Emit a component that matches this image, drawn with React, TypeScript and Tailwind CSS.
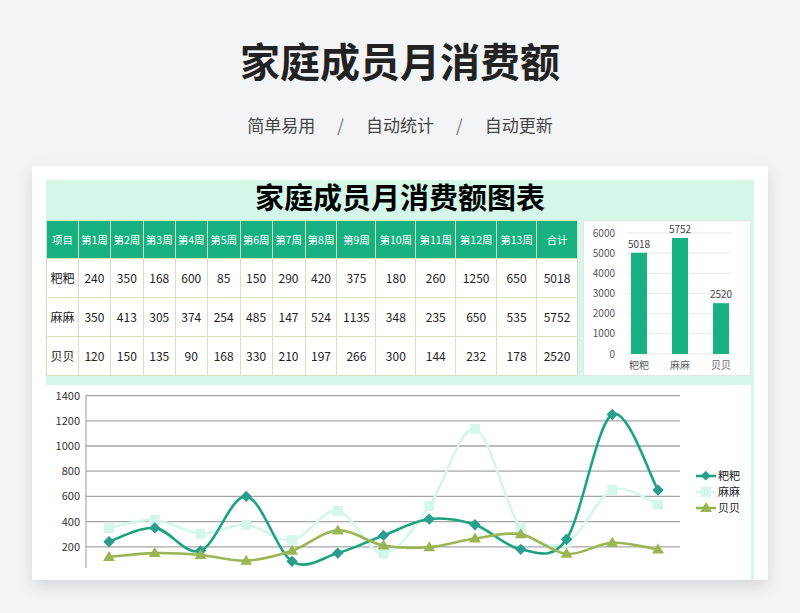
import React from "react";

const weeks = ["第1周","第2周","第3周","第4周","第5周","第6周","第7周","第8周","第9周","第10周","第11周","第12周","第13周"];
const rows = [
  { name: "粑粑", vals: [240,350,168,600,85,150,290,420,375,180,260,1250,650], total: 5018 },
  { name: "麻麻", vals: [350,413,305,374,254,485,147,524,1135,348,235,650,535], total: 5752 },
  { name: "贝贝", vals: [120,150,135,90,168,330,210,197,266,300,144,232,178], total: 2520 },
];
const colW = [32,32,33,32,32,33,32,33,32,39,40,40,41,40,41];
const font = { fontFamily: '"Noto Sans CJK SC", "Noto Sans", sans-serif' };

function smooth(pts: [number, number][]) {
  let d = `M${pts[0][0]},${pts[0][1]}`;
  for (let i = 0; i < pts.length - 1; i++) {
    const p0 = pts[i - 1] || pts[i], p1 = pts[i], p2 = pts[i + 1], p3 = pts[i + 2] || p2;
    const c1 = [p1[0] + (p2[0] - p0[0]) / 6, p1[1] + (p2[1] - p0[1]) / 6];
    const c2 = [p2[0] - (p3[0] - p1[0]) / 6, p2[1] - (p3[1] - p1[1]) / 6];
    d += ` C${c1[0]},${c1[1]} ${c2[0]},${c2[1]} ${p2[0]},${p2[1]}`;
  }
  return d;
}

function BarChart() {
  const y0 = 132, k = 121 / 6000;
  const bars = [{ n: "粑粑", v: 5018, x: 55 }, { n: "麻麻", v: 5752, x: 96 }, { n: "贝贝", v: 2520, x: 137 }];
  return (
    <svg width="166" height="154" className="block">
      {[0,1000,2000,3000,4000,5000,6000].map((t) => (
        <g key={t}>
          <line x1="43" x2="146" y1={y0 - t * k} y2={y0 - t * k} stroke="#e5e5e5" />
          <text x="31" y={y0 - t * k + 3.5} fontSize="10" textAnchor="end" fill="#555">{t}</text>
        </g>
      ))}
      {bars.map((b) => (
        <g key={b.n}>
          <rect x={b.x - 8} y={y0 - b.v * k} width="16" height={b.v * k} fill="#17b181" />
          <text x={b.x} y={y0 - b.v * k - 5} fontSize="10" textAnchor="middle" fill="#444">{b.v}</text>
          <text x={b.x} y={y0 + 15} fontSize="10" textAnchor="middle" fill="#666">{b.n}</text>
        </g>
      ))}
    </svg>
  );
}

function LineChart() {
  const x = (i: number) => 63 + i * 45.75;
  const y = (v: number) => 187 - v * 0.126;
  const colors = ["#1aa37f", "#d3f7ea", "#9bb554"];
  return (
    <svg width="706" height="183" className="block">
      {[0,200,400,600,800,1000,1200,1400].map((t) => (
        <g key={t}>
          <line x1="40" x2="634" y1={y(t)} y2={y(t)} stroke="#a6a6a6" strokeWidth="1.3" />
          {t > 0 && <text x="34" y={y(t) + 4} fontSize="11" textAnchor="end" fill="#333">{t}</text>}
        </g>
      ))}
      <line x1="40" x2="40" y1={y(1400)} y2="183" stroke="#999" />
      {[1, 0, 2].map((ri) => {
        const pts = rows[ri].vals.map((v, i) => [x(i), y(v)] as [number, number]);
        return (
          <g key={ri}>
            <path d={smooth(pts)} fill="none" stroke={colors[ri]} strokeWidth="2.6" />
            {pts.map(([px, py], i) =>
              ri === 0 ? <rect key={i} x={px - 4} y={py - 4} width="8" height="8" transform={`rotate(45 ${px} ${py})`} fill="#2a9d8f" />
              : ri === 1 ? <rect key={i} x={px - 5} y={py - 5} width="10" height="10" fill="#d3f7ea" />
              : <polygon key={i} points={`${px},${py - 6} ${px + 6},${py + 4} ${px - 6},${py + 4}`} fill="#9bb554" />
            )}
          </g>
        );
      })}
      {rows.map((r, i) => {
        const ly = 91 + i * 16;
        return (
          <g key={r.name}>
            <line x1="650" x2="670" y1={ly} y2={ly} stroke={colors[i]} strokeWidth="2.6" />
            {i === 0 ? <rect x="656" y={ly - 3.5} width="7" height="7" transform={`rotate(45 660 ${ly})`} fill="#2a9d8f" />
              : i === 1 ? <rect x="655" y={ly - 5} width="10" height="10" fill="#d3f7ea" />
              : <polygon points={`660,${ly - 6} 666,${ly + 4} 654,${ly + 4}`} fill="#9bb554" />}
            <text x="672" y={ly + 4} fontSize="11" fill="#222">{r.name}</text>
          </g>
        );
      })}
    </svg>
  );
}

export default function App() {
  return (
    <div className="w-[800px] h-[613px] bg-[#f3f4f6] overflow-hidden" style={font}>
      <div className="pt-[34px] text-center text-[40px] font-bold leading-[52px] text-[#222]">家庭成员月消费额</div>
      <div className="mt-[27px] flex justify-center gap-[22px] text-[17px] text-[#444] leading-[24px]">
        <span>简单易用</span><span className="text-[#777]">/</span><span>自动统计</span><span className="text-[#777]">/</span><span>自动更新</span>
      </div>
      <div className="mt-[29px] ml-[32px] w-[736px] h-[414px] bg-white shadow-[0_6px_16px_rgba(0,0,0,0.12)] pt-[14px] px-[14px] overflow-hidden">
        <div className="bg-[#d4f7ea] h-[400px]">
          <div className="h-[40px] text-center text-[29px] font-bold leading-[30px] text-black pt-[1px]">家庭成员月消费额图表</div>
          <div className="flex gap-[5px]">
            <table className="border-collapse text-[12px] text-[#222]" style={{ width: 532 }}>
              <tbody>
                <tr className="bg-[#17b181] text-white h-[38px]">
                  {["项目", ...weeks, "合计"].map((h, i) => (
                    <td key={h} style={{ width: colW[i] }} className="border border-[#d6e3b8] text-center text-[10.5px] p-0 whitespace-nowrap">{h}</td>
                  ))}
                </tr>
                {rows.map((r) => (
                  <tr key={r.name} className="bg-white h-[39px]">
                    <td className="border border-[#d6e3b8] text-center p-0">{r.name}</td>
                    {r.vals.map((v, i) => <td key={i} className="border border-[#d6e3b8] text-center p-0">{v}</td>)}
                    <td className="border border-[#d6e3b8] text-center p-0">{r.total}</td>
                  </tr>
                ))}
              </tbody>
            </table>
            <div className="w-[168px] h-[156px] bg-white border border-[#e2e8e4] pt-[1px]">
              <BarChart />
            </div>
          </div>
          <div className="mt-[9px] bg-white h-[200px] border-r-[3px] border-[#d4f7ea]">
            <LineChart />
          </div>
        </div>
      </div>
    </div>
  );
}
